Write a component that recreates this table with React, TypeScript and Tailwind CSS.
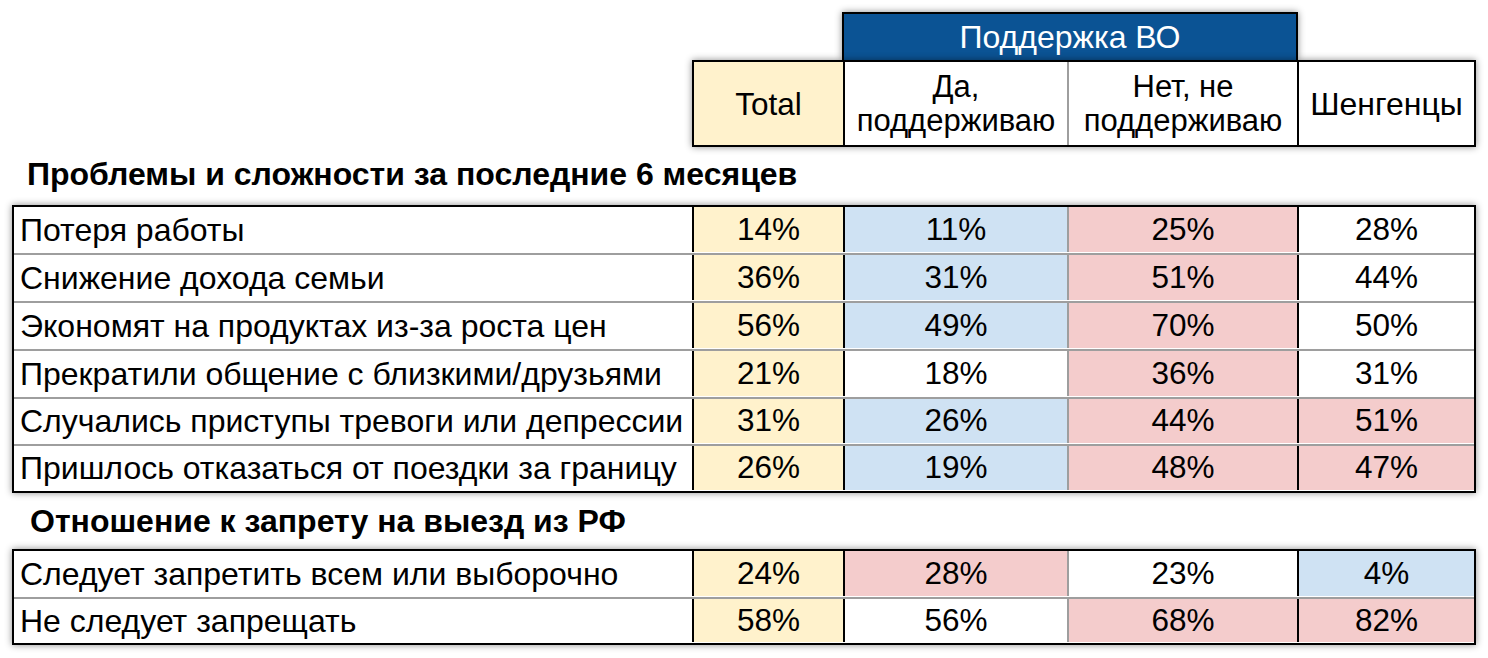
import React from "react";

type C = "y" | "b" | "p" | "w";
const bg: Record<C, string> = {
  y: "bg-[#fff2cc]",
  b: "bg-[#cfe2f3]",
  p: "bg-[#f4cccc]",
  w: "bg-white",
};

type Row = { label: string; v: [string, string, string, string]; c: [C, C, C] };

const main: Row[] = [
  { label: "Потеря работы", v: ["14%", "11%", "25%", "28%"], c: ["b", "p", "w"] },
  { label: "Снижение дохода семьи", v: ["36%", "31%", "51%", "44%"], c: ["b", "p", "w"] },
  { label: "Экономят на продуктах из-за роста цен", v: ["56%", "49%", "70%", "50%"], c: ["b", "p", "w"] },
  { label: "Прекратили общение с близкими/друзьями", v: ["21%", "18%", "36%", "31%"], c: ["w", "p", "w"] },
  { label: "Случались приступы тревоги или депрессии", v: ["31%", "26%", "44%", "51%"], c: ["b", "p", "p"] },
  { label: "Пришлось отказаться от поездки за границу", v: ["26%", "19%", "48%", "47%"], c: ["b", "p", "p"] },
];

const second: Row[] = [
  { label: "Следует запретить всем или выборочно", v: ["24%", "28%", "23%", "4%"], c: ["p", "w", "b"] },
  { label: "Не следует запрещать", v: ["58%", "56%", "68%", "82%"], c: ["w", "p", "p"] },
];

const mainHeights = [
  "h-[46px]",
  "h-[48px] border-t-2 border-[#9e9e9e]",
  "h-[48px] border-t-2 border-[#9e9e9e]",
  "h-[48px] border-t-2 border-[#9e9e9e]",
  "h-[47px] border-t-2 border-[#9e9e9e]",
  "h-[47px] border-t-2 border-[#9e9e9e]",
];
const secondHeights = ["h-[46px]", "h-[46px] border-t-2 border-[#9e9e9e]"];

function DataRow({ r, cls }: { r: Row; cls: string }) {
  return (
    <div className={`flex pb-[1px] ${cls}`}>
      <div className="w-[678px] flex items-center pl-[6px] whitespace-nowrap text-[32px]">{r.label}</div>
      <div className={`w-[151px] border-l-2 border-black flex items-center justify-center ${bg.y}`}>{r.v[0]}</div>
      <div className={`w-[224px] border-l-2 border-black flex items-center justify-center ${bg[r.c[0]]}`}>{r.v[1]}</div>
      <div className={`w-[230px] border-l-2 border-[#9e9e9e] flex items-center justify-center ${bg[r.c[1]]}`}>{r.v[2]}</div>
      <div className={`w-[177px] border-l-2 border-black flex items-center justify-center ${bg[r.c[2]]}`}>{r.v[3]}</div>
    </div>
  );
}

export default function App() {
  return (
    <div
      className="w-[1488px] h-[658px] bg-white text-black text-[31.5px] leading-none overflow-hidden"
      style={{ fontFamily: '"Liberation Sans", Arial, sans-serif' }}
    >
      <div className="pt-[12px] pl-[692px]">
        <div className="ml-[150px] w-[456px] h-[48px] border-x-2 border-t-2 border-black bg-[#0b5394] text-white text-[32px] flex items-center justify-center shadow-[0_0_7px_rgba(0,0,0,0.45)]">
          Поддержка ВО
        </div>
        <div className="relative w-[784px] h-[87px] border-2 border-black flex bg-white shadow-[0_0_7px_rgba(0,0,0,0.45)] leading-[34px]">
          <div className="w-[149px] bg-[#fff2cc] flex items-center justify-center">Total</div>
          <div className="w-[224px] border-l-2 border-black flex items-center justify-center text-center text-[31px]">
            Да,
            <br />
            поддерживаю
          </div>
          <div className="w-[230px] border-l-2 border-[#9e9e9e] flex items-center justify-center text-center text-[31px]">
            Нет, не
            <br />
            поддерживаю
          </div>
          <div className="w-[177px] border-l-2 border-black flex items-center justify-center text-[32px]">Шенгенцы</div>
        </div>
      </div>

      <div className="pl-[12px]">
        <div className="h-[58px] flex items-center pl-[15px] pb-[4px] font-bold text-[32px]">
          Проблемы и сложности за последние 6 месяцев
        </div>
        <div className="w-[1464px] border-2 border-black shadow-[0_0_7px_rgba(0,0,0,0.45)]">
          {main.map((r, i) => (
            <DataRow key={i} r={r} cls={mainHeights[i]} />
          ))}
        </div>
        <div className="h-[56px] flex items-center pl-[18px] font-bold text-[32px]">
          Отношение к запрету на выезд из РФ
        </div>
        <div className="w-[1464px] border-2 border-black shadow-[0_0_7px_rgba(0,0,0,0.45)]">
          {second.map((r, i) => (
            <DataRow key={i} r={r} cls={secondHeights[i]} />
          ))}
        </div>
      </div>
    </div>
  );
}
